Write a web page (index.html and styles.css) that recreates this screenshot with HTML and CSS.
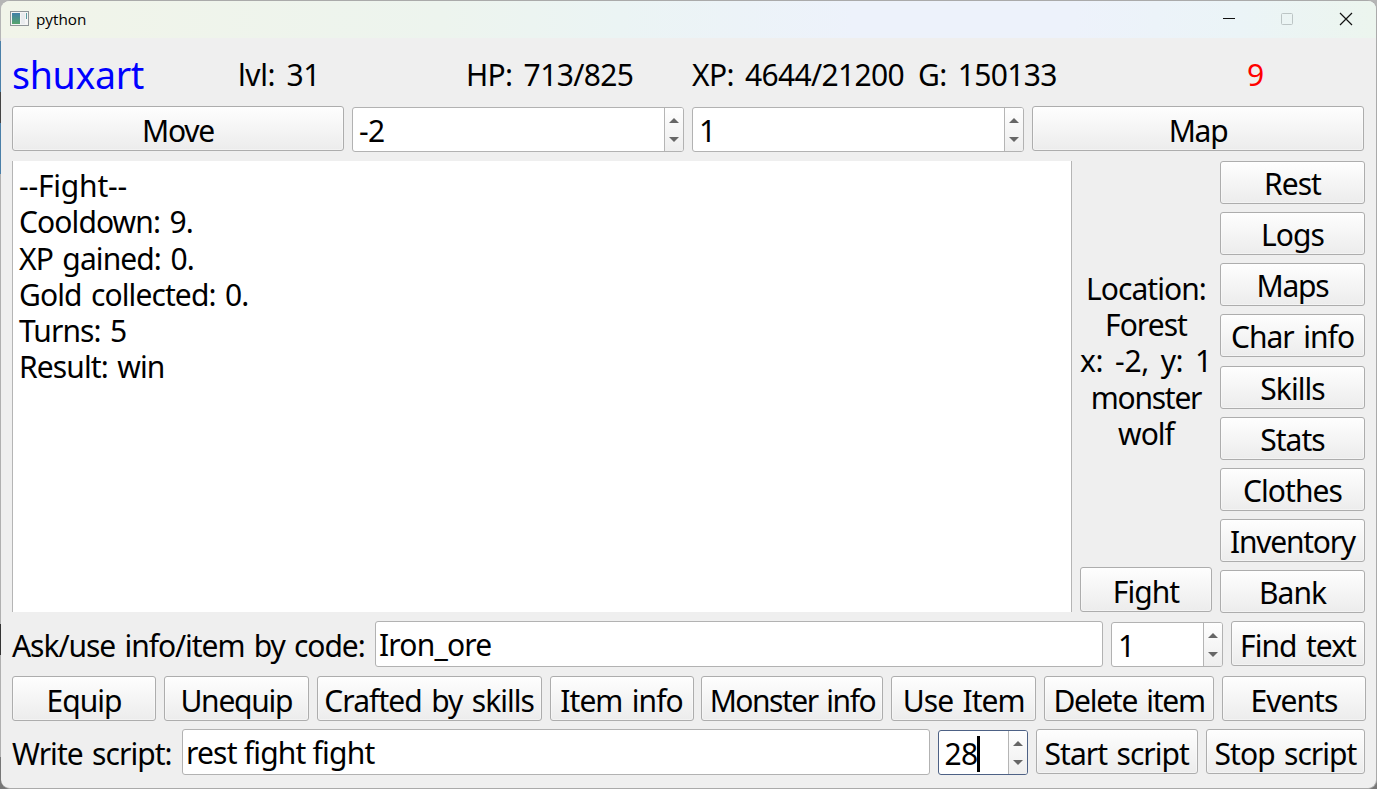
FILE: index.html
```html
<!DOCTYPE html>
<html lang="en">
<head>
<meta charset="utf-8">
<title>python</title>
<link rel="stylesheet" href="styles.css">
</head>
<body>
<div class="window">
  <header class="titlebar">
    <svg class="app-icon" width="19" height="15" viewBox="0 0 19 15">
      <defs><linearGradient id="g" x1="0" y1="0" x2="0" y2="1"><stop offset="0" stop-color="#4180a8"/><stop offset="1" stop-color="#56a56c"/></linearGradient></defs>
      <rect x=".5" y=".5" width="18" height="14" fill="#f5f5f5" stroke="#8f9598"/>
      <rect x="2" y="2" width="8" height="11" fill="url(#g)"/>
      <rect x="11" y="2" width="4" height="11" fill="#e9ebee"/>
      <rect x="16" y="2" width="1" height="6" fill="#5a9ba0"/>
    </svg>
    <span class="title">python</span>
    <svg class="controls" width="130" height="14" viewBox="0 0 130 14" fill="none" stroke="#111">
      <path d="M0 6.5H12"/>
      <rect x="58.5" y="1.5" width="11" height="11" rx="1" stroke="#bcc5c5"/>
      <path d="M117 1L129 13M129 1L117 13" stroke-width="1.2"/>
    </svg>
  </header>
  <main class="content">
    <div class="stats">
      <span class="name">shuxart</span>
      <span class="level">lvl: 31</span>
      <span class="hp">HP: 713/825</span>
      <span class="xp">XP: 4644/21200</span>
      <span class="gold">G: 150133</span>
      <span class="cooldown">9</span>
    </div>
    <div class="row move-row">
      <button class="btn tight">Move</button>
      <div class="spin"><span class="value">-2</span><span class="steps"><i class="up"></i><i class="down"></i></span></div>
      <div class="spin"><span class="value">1</span><span class="steps"><i class="up"></i><i class="down"></i></span></div>
      <button class="btn tight">Map</button>
    </div>
    <div class="middle">
      <div class="log"><p class="heading">--Fight--</p><p>Cooldown: 9.</p><p>XP gained: 0.</p><p>Gold collected: 0.</p><p>Turns: 5</p><p>Result: win</p></div>
      <div class="place">
        <div class="location"><p>Location:</p><p>Forest</p><p class="coords">x: -2, y: 1</p><p class="tight">monster</p><p>wolf</p></div>
        <button class="btn">Fight</button>
      </div>
      <nav class="side">
        <button class="btn">Rest</button>
        <button class="btn">Logs</button>
        <button class="btn tight">Maps</button>
        <button class="btn">Char info</button>
        <button class="btn">Skills</button>
        <button class="btn">Stats</button>
        <button class="btn">Clothes</button>
        <button class="btn tight">Inventory</button>
        <button class="btn">Bank</button>
      </nav>
    </div>
    <div class="row ask-row">
      <span class="label">Ask/use info/item by code:</span>
      <div class="edit">Iron_ore</div>
      <div class="spin"><span class="value">1</span><span class="steps"><i class="up"></i><i class="down"></i></span></div>
      <button class="btn">Find text</button>
    </div>
    <div class="row action-row">
      <button class="btn">Equip</button>
      <button class="btn tight">Unequip</button>
      <button class="btn">Crafted by skills</button>
      <button class="btn">Item info</button>
      <button class="btn tighter">Monster info</button>
      <button class="btn">Use Item</button>
      <button class="btn tight">Delete item</button>
      <button class="btn">Events</button>
    </div>
    <div class="row script-row">
      <span class="label">Write script:</span>
      <div class="edit">rest fight fight</div>
      <div class="spin focused"><span class="value">28<b class="caret"></b></span><span class="steps"><i class="up"></i><i class="down"></i></span></div>
      <button class="btn">Start script</button>
      <button class="btn">Stop script</button>
    </div>
  </main>
</div>
</body>
</html>
```
FILE: styles.css
```css
* { box-sizing: border-box; }
body {
  margin: 0;
  height: 789px;
  overflow: hidden;
  background: linear-gradient(#b5b5b5 0 41px, #4a7fa8 41px 92px, #444 92px 123px, #4a7fa8 123px 174px, #b0b0b0 174px 624px, #333 624px 655px, #b0b0b0 655px 757px, #777 757px);
  font-family: "Noto Sans", sans-serif;
  font-size: 30px;
  line-height: 36px;
  letter-spacing: -0.95px;
  word-spacing: 2.5px;
  color: #000;
}
p { margin: 0; }
.window {
  height: 789px;
  margin-left: 1px;
  border: solid #aaa;
  border-width: 1px 1px 1px 0;
  border-radius: 9px;
  background: #efefef;
  overflow: hidden;
}
.titlebar {
  height: 37px;
  display: flex;
  align-items: center;
  padding: 0 23px 0 9px;
  background: linear-gradient(90deg, #f1f4e9, #edf4ee 32%, #ebf4f4 45%, #edf2fb 62%, #edf2fb 78%, #ebf4f7 90%, #ecf5ee);
}
.title { font-family: "Open Sans", sans-serif; font-size: 15.3px; line-height: 20px; letter-spacing: 0; margin: -1px 0 0 7px; }
.controls { margin: -2px 0 0 auto; }
.app-icon { margin-top: -2px; }
.content { padding: 0 11px; }
.stats {
  height: 68px;
  display: grid;
  grid-template-columns: 226px 228px 226px 226px 329px 1fr;
  padding-top: 19px;
  white-space: nowrap;
  letter-spacing: -0.65px;
  word-spacing: 4px;
}
.name { font-size: 37.5px; letter-spacing: -0.3px; color: #00f; }
.level { letter-spacing: -0.4px; }
.cooldown { color: #f00; }
.row { display: grid; column-gap: 8px; height: 46px; }
.btn {
  display: block;
  height: 45px;
  margin: 0;
  padding: 4px 0 0;
  border: 1px solid #adadad;
  border-radius: 3px;
  background: linear-gradient(#fefefe, #ececec);
  box-shadow: inset 0 0 0 1px rgba(255, 255, 255, .4);
  font: inherit;
  letter-spacing: inherit;
  word-spacing: inherit;
  color: #000;
  text-align: center;
  white-space: nowrap;
}
.tight { letter-spacing: -1.25px; }
.tighter { letter-spacing: -1.5px; }
.edit, .spin {
  border: 1px solid #b2b2b2;
  border-radius: 3px;
  background: #fff;
  white-space: nowrap;
}
.edit { padding: 5px 0 0 3px; height: 46px; letter-spacing: -0.8px; word-spacing: 0; }
.spin { display: flex; height: 45px; margin-top: 1px; overflow: hidden; letter-spacing: -0.7px; }
.value { flex: 1; padding: 5px 0 0 6px; display: flex; }
.steps {
  width: 19px;
  border-left: 1px solid #b5b5b5;
  background: linear-gradient(#fefefe, #eee);
  display: flex;
  flex-direction: column;
  align-items: center;
  padding-top: 10px;
  gap: 14px;
}
.up, .down { border: 5px solid transparent; border-top: 0; border-bottom: 5px solid #666; }
.down { border-bottom: 0; border-top: 5px solid #666; }
.caret { width: 3px; height: 36px; background: #000; }
.focused { border-color: #4d6185; }
.focused .value { padding: 5px 0 0 6px; }
.move-row { grid-template-columns: repeat(4, 332px); column-gap: 8px; }
.middle {
  display: grid;
  grid-template-columns: 1060px 132px 145px;
  column-gap: 8px;
  height: 452px;
  margin-top: 9px;
}
.log {
  height: 451px;
  border: solid #b5b5b5;
  border-width: 0 1px;
  background: #fff;
  padding: 7px 0 0 6px;
  line-height: 36.3px;
  letter-spacing: -0.9px;
}
.heading { letter-spacing: -0.2px; }
.place { display: flex; flex-direction: column; justify-content: space-between; height: 451px; }
.location { padding-top: 110px; text-align: center; line-height: 36.2px; white-space: nowrap; }
.coords { letter-spacing: -0.4px; word-spacing: 4.5px; }
.side { display: flex; flex-direction: column; justify-content: space-between; }
.side .btn { height: 43px; padding-top: 3px; }
.ask-row { grid-template-columns: 355px 728px 112px 134px; margin-top: 8px; }
.label { padding-top: 7px; white-space: nowrap; }
.ask-row .label { letter-spacing: -1.05px; }
.action-row { grid-template-columns: 144px 145px 225px 144px 182px 145px 170px 144px; column-gap: 7.85px; margin-top: 9px; }
.script-row { grid-template-columns: 162px 747.5px 90px 162.5px 159px; margin-top: 7px; }
```
